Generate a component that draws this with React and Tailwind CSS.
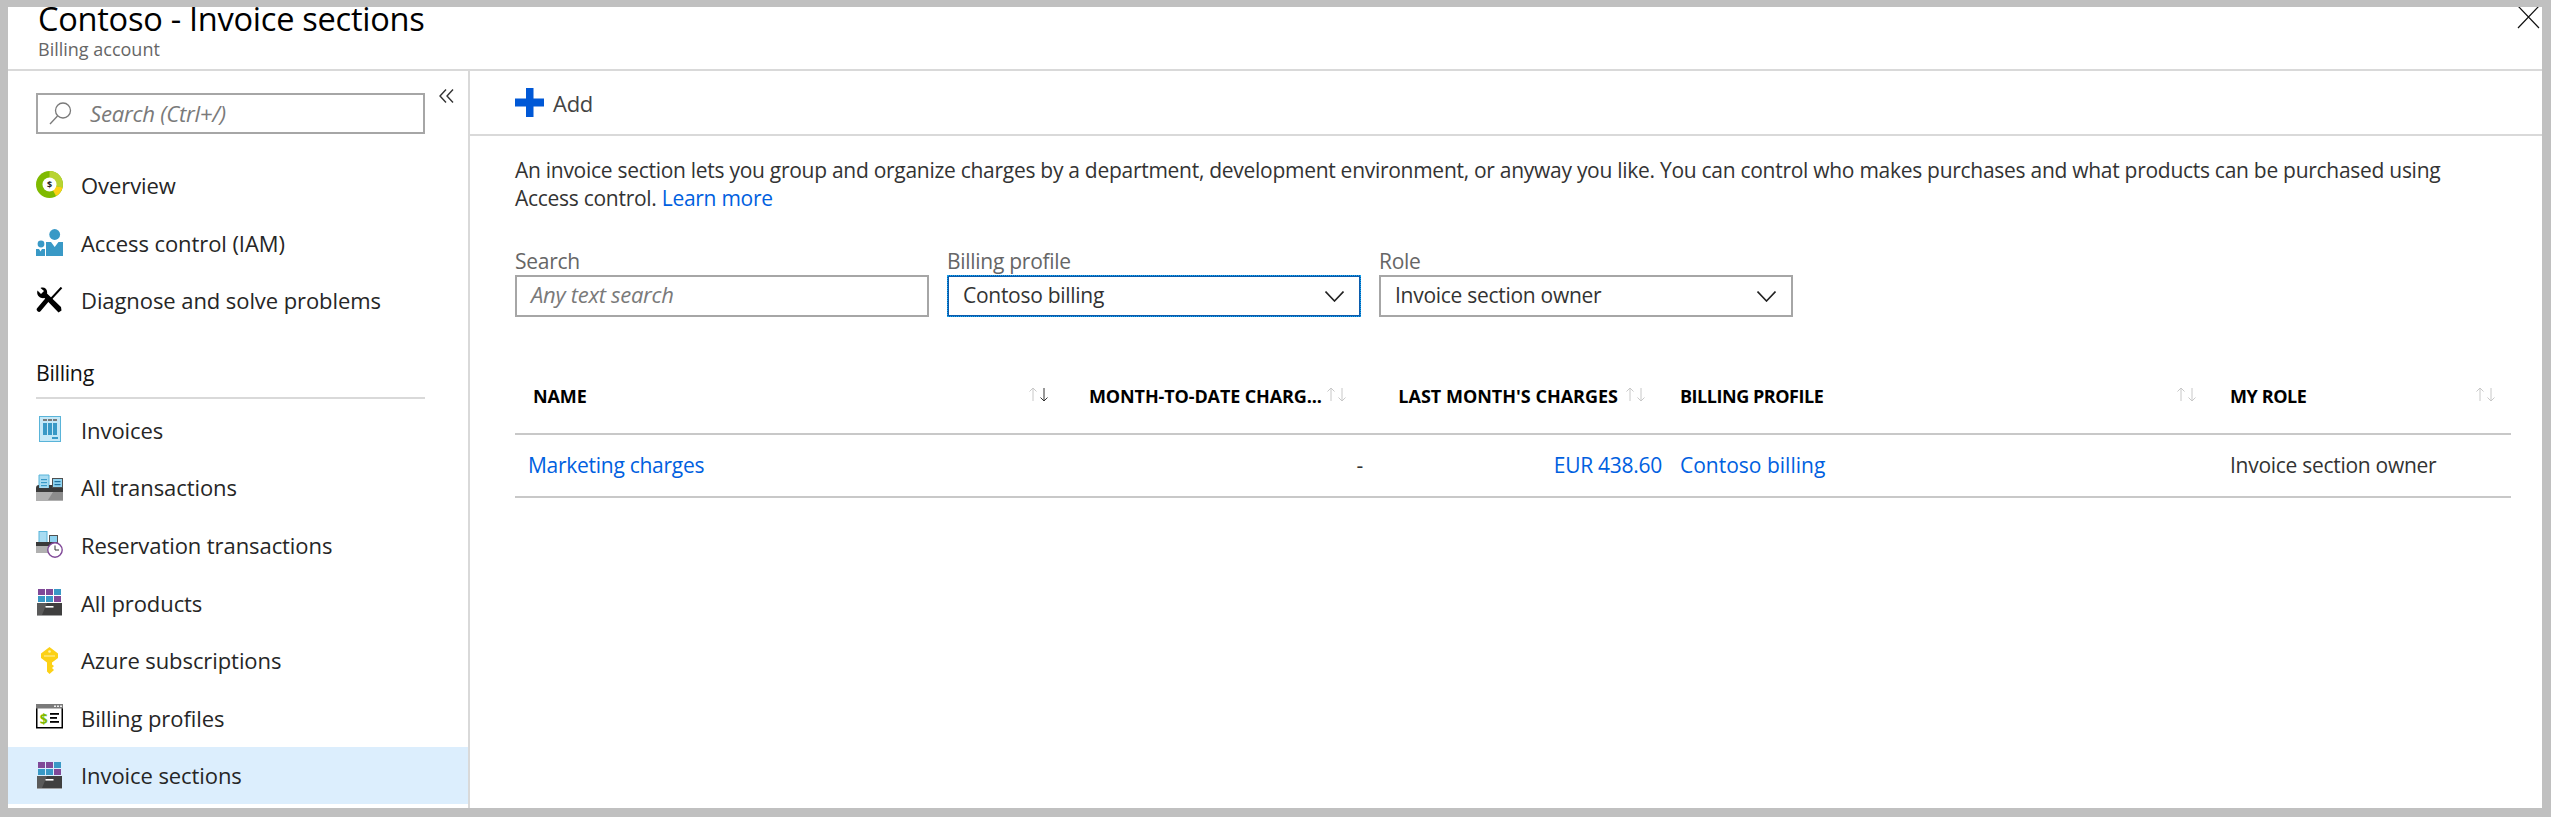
const FONT = "font-['Open_Sans','Noto_Sans',sans-serif]";

function Drawer({ y = 14 }) {
  return (
    <>
      <rect x="1" y={y} width="25" height={27 - y - 1} fill="#3f3f3f" />
      <rect x="1" y="26" width="25" height="1" fill="#a0a1a2" />
      <polygon points={`1,${y} 11,${y} 6,26 1,26`} fill="#5a5a5a" />
      <rect x="9.5" y={y + 3} width="8" height="1.6" fill="#ffffff" />
    </>
  );
}

function Products() {
  const c = [
    ["#804998", 2, 0],
    ["#804998", 10, 0],
    ["#3999c6", 18, 0],
    ["#3999c6", 2, 7],
    ["#3999c6", 10, 7],
    ["#804998", 18, 7],
  ];
  return (
    <svg width="27" height="27" viewBox="0 0 27 27">
      {c.map(([f, x, y], i) => (
        <rect key={i} x={x} y={y} width="7" height="6" fill={f} />
      ))}
      <Drawer />
    </svg>
  );
}

const icons = {
  overview: (
    <svg width="27" height="27" viewBox="0 0 27 27">
      <circle cx="13.5" cy="13.5" r="13.5" fill="#7fba00" />
      <path d="M13.5 0A13.5 13.5 0 0 1 26.6 16.5L19 15A6 6 0 0 0 13.5 7Z" fill="#b8d432" />
      <path d="M26.6 16.5A13.5 13.5 0 0 1 20 25L16.5 18.5A6 6 0 0 0 19 15Z" fill="#fcd116" />
      <circle cx="13.5" cy="13.5" r="7" fill="#ffffff" />
      <text x="13.5" y="17" textAnchor="middle" fontSize="9" fontWeight="700" fill="#222" fontFamily="Open Sans">$</text>
    </svg>
  ),
  iam: (
    <svg width="27" height="27" viewBox="0 0 27 27">
      <circle cx="18.7" cy="5.5" r="5.4" fill="#3999c6" />
      <path d="M10 13H15L18.7 18L22.5 13H27V27H10Z" fill="#3999c6" />
      <circle cx="5" cy="15" r="3.4" fill="#3999c6" />
      <path d="M0 20H3L4.5 22.5L6 20H9V27H0Z" fill="#3999c6" />
    </svg>
  ),
  tools: (
    <svg width="27" height="27" viewBox="0 0 27 27">
      <path d="M25.5 0.5L14 13" stroke="#000" strokeWidth="2" fill="none" />
      <path d="M11 13L3 22.5" stroke="#000" strokeWidth="4.5" fill="none" strokeLinecap="round" />
      <path d="M1.5 3.5L5 7L8 4L4.5 1C8 -0.5 12 2 11 6.5L25 20L25.5 23.5L22.5 25.5L8.5 11C4 12 0 8 1.5 3.5Z" fill="#000" />
    </svg>
  ),
  invoices: (
    <svg width="27" height="27" viewBox="0 0 27 27">
      <rect x="3.5" y="0.5" width="21" height="25" fill="#c5e8f7" stroke="#59b4d9" />
      <rect x="7" y="3" width="4" height="2" fill="#7a7a7a" />
      <rect x="12" y="3" width="4" height="2" fill="#7a7a7a" />
      <rect x="17" y="3" width="4" height="2" fill="#7a7a7a" />
      <rect x="7" y="7" width="4" height="12" fill="#3999c6" />
      <rect x="12" y="7" width="4" height="12" fill="#3999c6" />
      <rect x="17" y="7" width="4" height="12" fill="#3999c6" />
      <rect x="16" y="21" width="6" height="2" fill="#3999c6" />
    </svg>
  ),
  transactions: (
    <svg width="27" height="27" viewBox="0 0 27 27">
      <path d="M3 1H13V16H3Z" fill="#a9dcf2" stroke="#59b4d9" />
      <rect x="5" y="5" width="6" height="1.2" fill="#3999c6" />
      <rect x="5" y="8" width="6" height="1.2" fill="#3999c6" />
      <rect x="5" y="11" width="6" height="1.2" fill="#3999c6" />
      <rect x="16" y="4" width="11" height="10" fill="#505050" />
      <rect x="17" y="5" width="9" height="8" fill="#8fd3f0" />
      <rect x="18.5" y="7" width="6" height="1.2" fill="#1f6f9c" />
      <rect x="18.5" y="10" width="6" height="1.2" fill="#1f6f9c" />
      <path d="M0 14Q0 11 3 11V14H13V11H16V14H27V18H0Z" fill="#3a3a3a" />
      <rect x="0" y="18" width="27" height="9" fill="#b0b0b0" />
      <polygon points="12,26 17,18 27,18 27,26" fill="#8c8c8c" />
    </svg>
  ),
  reservation: (
    <svg width="27" height="27" viewBox="0 0 27 27">
      <rect x="3" y="0.5" width="8" height="11" fill="#a9dcf2" stroke="#59b4d9" />
      <rect x="13" y="4" width="9" height="8" fill="#505050" />
      <rect x="14" y="5" width="7" height="6" fill="#8fd3f0" />
      <rect x="0" y="11" width="19" height="4" fill="#3a3a3a" />
      <rect x="0" y="15" width="14" height="7" fill="#b0b0b0" />
      <circle cx="19" cy="19" r="7.2" fill="#ffffff" stroke="#804998" strokeWidth="1.4" />
      <path d="M19 14.5V19H23" stroke="#333" strokeWidth="1" fill="none" />
    </svg>
  ),
  products: <Products />,
  key: (
    <svg width="27" height="27" viewBox="0 0 27 27">
      <path d="M13.5 0L22 6.5V11L16 15.5V17.5L18 19L16 21L18 23L13.5 27L11 24.5V15.5L5 11V6.5Z" fill="#fcd116" />
      <path d="M8 9H19" stroke="#fff3a8" strokeWidth="1" />
      <circle cx="13.5" cy="4.5" r="1.3" fill="#fff3a8" />
    </svg>
  ),
  profiles: (
    <svg width="27" height="27" viewBox="0 0 27 27">
      <rect x="0.75" y="0.75" width="25.5" height="23" fill="#ffffff" stroke="#000" strokeWidth="1.5" />
      <rect x="0" y="0" width="27" height="4.5" fill="#7a7a7a" />
      <rect x="18" y="1.5" width="2" height="1.5" fill="#eee" />
      <rect x="21" y="1.5" width="2" height="1.5" fill="#eee" />
      <rect x="24" y="1.5" width="2" height="1.5" fill="#eee" />
      <text x="7.5" y="20" textAnchor="middle" fontSize="14" fontWeight="700" fill="#7fba00" fontFamily="Open Sans">$</text>
      <rect x="14" y="9" width="9" height="1.8" fill="#000" />
      <rect x="14" y="13" width="7" height="1.8" fill="#000" />
      <rect x="14" y="17" width="9" height="1.8" fill="#000" />
    </svg>
  ),
};

function NavRow({ icon, label, active }) {
  return (
    <div className={`flex h-[57.6px] items-center pl-[28px] ${active ? "bg-[#dceefd]" : ""}`}>
      <span className="flex w-[45px] shrink-0">{icons[icon]}</span>
      <span className="pt-[1px] text-[22px] tracking-[-0.08px] text-[#262626] whitespace-nowrap">{label}</span>
    </div>
  );
}

function Sort({ active }) {
  return (
    <svg width="21" height="15" viewBox="0 0 21 15" className="-mt-[4px] shrink-0">
      <path d="M5 14V1M1.5 4.5L5 1L8.5 4.5" stroke="#c8c8c8" strokeWidth="1" fill="none" />
      <path d="M16 1V14M12.5 10.5L16 14L19.5 10.5" stroke={active ? "#333333" : "#c8c8c8"} strokeWidth="1" fill="none" />
    </svg>
  );
}

function Chevron() {
  return (
    <svg width="19" height="11" viewBox="0 0 19 11" className="shrink-0">
      <path d="M0.5 0.5L9.5 10L18.5 0.5" stroke="#222222" strokeWidth="1.6" fill="none" />
    </svg>
  );
}

function Select({ label, value, focused }) {
  return (
    <div className="flex w-[414px] flex-col">
      <div className="h-[28px] text-[21px] leading-[28px] text-[#666666]">{label}</div>
      <div
        className={`flex h-[42px] items-center justify-between border-2 pl-[14px] pr-[15px] ${
          focused ? "border-[#0b5cad] outline-1 -outline-offset-1 outline-dotted outline-[#19a6ee]" : "border-[#a6a6a6]"
        }`}
      >
        <span className="text-[21px] text-[#333333]">{value}</span>
        <Chevron />
      </div>
    </div>
  );
}

const H = "text-[18px] font-bold text-black whitespace-nowrap";
const Row = "grid grid-cols-[557px_300px_299px_550px_290px]";

export default function App() {
  return (
    <div className={`${FONT} flex h-[817px] w-[2551px] flex-col bg-[#c0c0c0] pb-[9px] pl-[8px] pr-[9px] pt-[7px] tracking-[-0.28px]`}>
      <div className="flex min-h-0 flex-1 flex-col bg-white">
        <header className="relative h-[64px] shrink-0 overflow-hidden border-b-2 border-[#d9d9d9] pl-[30px]">
          <div className="-mt-[10px] text-[32.6px] leading-[44px] text-black whitespace-nowrap">Contoso - Invoice sections</div>
          <div className="-mt-[3px] text-[18px] leading-[22px] tracking-normal text-[#666666]">Billing account</div>
          <svg width="23" height="22" viewBox="0 0 23 22" className="absolute right-[2px] top-0">
            <path d="M1 -1L22 21M22 -1L1 21" stroke="#111111" strokeWidth="1.2" fill="none" />
          </svg>
        </header>

        <div className="flex min-h-0 flex-1">
          <aside className="w-[462px] shrink-0 border-r-2 border-[#d9d9d9]">
            <div className="flex items-start pl-[28px] pt-[22px]">
              <div className="flex h-[41px] w-[389px] items-center border-2 border-[#a6a6a6] pl-[11px]">
                <svg width="23" height="23" viewBox="0 0 23 23" className="mr-[18px] shrink-0">
                  <circle cx="14" cy="8.5" r="7.5" stroke="#7a7a7a" strokeWidth="1.3" fill="none" />
                  <path d="M8.5 14L1 22" stroke="#7a7a7a" strokeWidth="1.3" fill="none" />
                </svg>
                <span className="text-[22.2px] italic text-[#7a7a7a]">Search (Ctrl+/)</span>
              </div>
              <svg width="15" height="14" viewBox="0 0 15 14" className="ml-[14px] -mt-[4px]">
                <path d="M7 0.5L1 7L7 13.5M14 0.5L8 7L14 13.5" stroke="#333333" strokeWidth="1.4" fill="none" />
              </svg>
            </div>
            <nav className="mt-[22.2px]">
              <NavRow icon="overview" label="Overview" />
              <NavRow icon="iam" label="Access control (IAM)" />
              <NavRow icon="tools" label="Diagnose and solve problems" />
            </nav>
            <div className="ml-[28px] flex h-[70px] w-[389px] items-end border-b-2 border-[#d9d9d9] pb-[8px] text-[21.3px] text-[#111111]">Billing</div>
            <nav className="mt-[2px]">
              <NavRow icon="invoices" label="Invoices" />
              <NavRow icon="transactions" label="All transactions" />
              <NavRow icon="reservation" label="Reservation transactions" />
              <NavRow icon="products" label="All products" />
              <NavRow icon="key" label="Azure subscriptions" />
              <NavRow icon="profiles" label="Billing profiles" />
              <NavRow icon="products" label="Invoice sections" active />
            </nav>
          </aside>

          <main className="min-w-0 flex-1">
            <div className="flex h-[65px] items-center border-b-2 border-[#d9d9d9] pl-[45px]">
              <svg width="29" height="29" viewBox="0 0 29 29" className="mr-[9px]">
                <path d="M11 0H18.5V10.5H29V18.5H18.5V29H11V18.5H0V10.5H11Z" fill="#0058d6" />
              </svg>
              <span className="pt-[2px] text-[22px] text-[#444444]">Add</span>
            </div>

            <div className="px-[45px] pt-[20px]">
              <p className="text-[21px] leading-[28px] text-[#333333] whitespace-nowrap">
                An invoice section lets you group and organize charges by a department, development environment, or anyway you like. You can control who makes purchases and what products can be purchased using
                <br />
                Access control. <span className="text-[#0060df]">Learn more</span>
              </p>

              <div className="mt-[35px] flex gap-[18px]">
                <div className="flex w-[414px] flex-col">
                  <div className="h-[28px] text-[21px] leading-[28px] text-[#666666]">Search</div>
                  <div className="flex h-[42px] items-center border-2 border-[#a6a6a6] pb-[3px] pl-[14px]">
                    <span className="text-[22px] italic text-[#7a7a7a]">Any text search</span>
                  </div>
                </div>
                <Select label="Billing profile" value="Contoso billing" focused />
                <Select label="Role" value="Invoice section owner" />
              </div>
            </div>

            <div className="ml-[45px] mr-[31px] mt-[45px]">
              <div className={`${Row} h-[73px] items-center border-b-2 border-[#c8c8c8]`}>
                <div className="flex items-center justify-between pb-[2px] pl-[18px] pr-[23px]">
                  <span className={`${H} tracking-[-0.1px]`}>NAME</span>
                  <Sort active />
                </div>
                <div className="flex items-center justify-between pb-[2px] pl-[17px] pr-[25px]">
                  <span className={`${H} tracking-[-0.12px]`}>MONTH-TO-DATE CHARG...</span>
                  <Sort />
                </div>
                <div className="flex items-center justify-end gap-[7px] pb-[2px] pr-[25px]">
                  <span className={`${H} tracking-normal`}>LAST MONTH'S CHARGES</span>
                  <Sort />
                </div>
                <div className="flex items-center justify-between pb-[2px] pl-[9px] pr-[24px]">
                  <span className={`${H} tracking-[-0.47px]`}>BILLING PROFILE</span>
                  <Sort />
                </div>
                <div className="flex items-center justify-between pb-[2px] pl-[9px] pr-[15px]">
                  <span className={`${H} tracking-[-0.4px]`}>MY ROLE</span>
                  <Sort />
                </div>
              </div>
              <div className={`${Row} h-[63px] items-center border-b-2 border-[#c8c8c8] text-[21px]`}>
                <div className="pl-[13px] text-[#0060df]">Marketing charges</div>
                <div className="pr-[9px] text-right text-[#333333]">-</div>
                <div className="pr-[9px] text-right text-[#0060df]">EUR 438.60</div>
                <div className="pl-[9px] tracking-normal text-[#0060df]">Contoso billing</div>
                <div className="pl-[9px] text-[#333333]">Invoice section owner</div>
              </div>
            </div>
          </main>
        </div>
      </div>
    </div>
  );
}
